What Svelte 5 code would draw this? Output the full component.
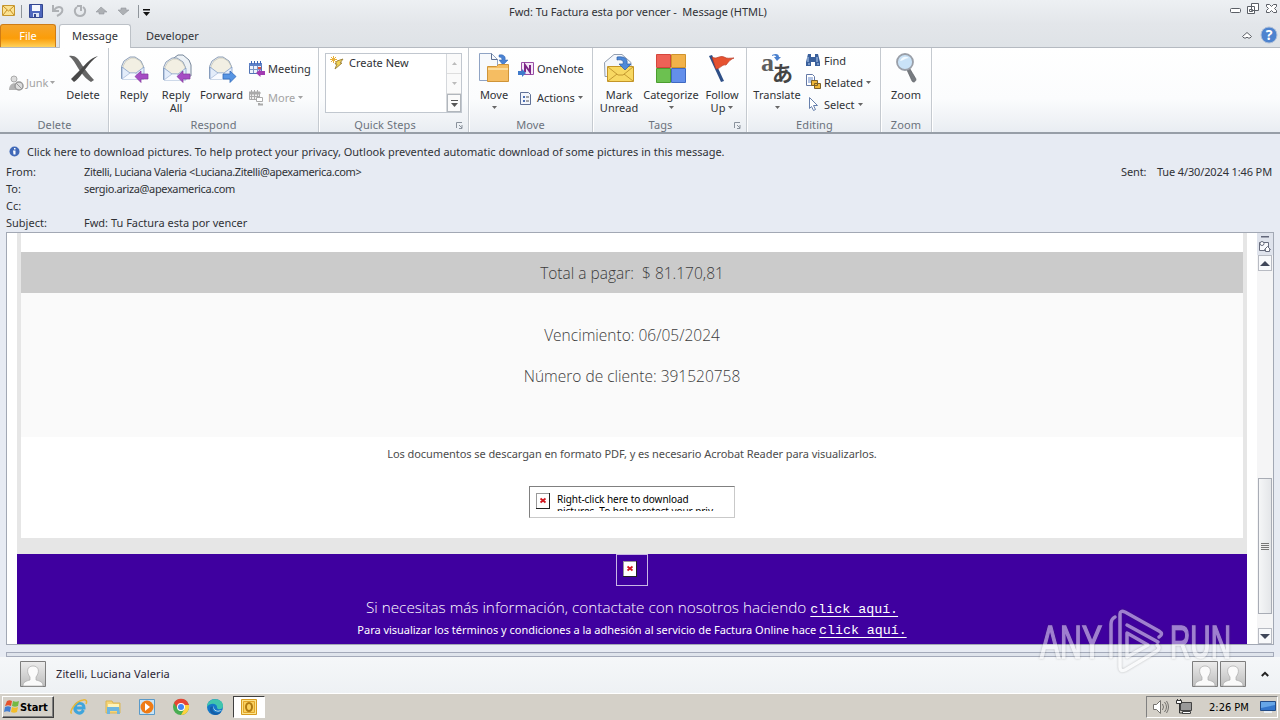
<script lang="ts">
  const fields = [
    { label: 'From:', value: 'Zitelli, Luciana Valeria <Luciana.Zitelli@apexamerica.com>' },
    { label: 'To:', value: 'sergio.ariza@apexamerica.com' },
    { label: 'Cc:', value: '' },
    { label: 'Subject:', value: 'Fwd: Tu Factura esta por vencer' },
  ];
</script>

{#snippet caret()}
  <svg class="caret" width="5" height="3" viewBox="0 0 5 3"><path d="M0 0h5L2.500 3z" fill="currentColor" /></svg>
{/snippet}

{#snippet envelope()}
  <path d="M3.500 14.500 6 9l6-4h5l6 4 2.500 5.500v12h-22z" fill="#edf1f8" stroke="#8fa0b8" />
  <path d="M5 14 8 9l5-3h4l5 3 3 5v4l-7 5h-6l-7-5z" fill="#f2efe3" stroke="#b9b8aa" stroke-width=".6" />
  <path d="m4 15 8 6h6l8-6v12H4z" fill="#e3ecfa" stroke="#7795c3" stroke-width=".7" />
  <path d="m4 27 8-6h5l8 6" fill="#f8faff" stroke="#a2b6d5" stroke-width=".7" />
{/snippet}

{#snippet replyIcon()}
  <svg width="32" height="32" viewBox="0 0 32 32">
    {@render envelope()}
    <path d="m17 24.500 6-5.500v3h7v5h-7v3.500z" fill="#a64cc4" stroke="#813a9c" stroke-width=".7" />
  </svg>
{/snippet}

{#snippet replyAllIcon()}
  <svg width="32" height="32" viewBox="0 0 32 32">
    <path d="m11 8 7-5h5l6 5 2 5v11H19z" fill="#edf2f6" stroke="#76869a" />
    <g transform="translate(0 1)">{@render envelope()}</g>
    <path d="m17 24.500 6-5.500v3h7v5h-7v3.500z" fill="#a64cc4" stroke="#813a9c" stroke-width=".7" />
  </svg>
{/snippet}

{#snippet forwardIcon()}
  <svg width="32" height="32" viewBox="0 0 32 32">
    {@render envelope()}
    <path d="m30 24.500-6-5.500v3h-7v5h7v3.500z" fill="#5795e4" stroke="#346bb9" stroke-width=".8" />
  </svg>
{/snippet}

{#snippet deleteIcon()}
  <svg width="32" height="32" viewBox="0 0 32 32">
    <path d="M2 4c6-1 9 2 13 9 4 6 8 11 12 15l-3 2C18 26 15 22 11 16 8 11 6 7 2 4z" fill="#666" />
    <path d="M31 4C23 6 19 12 14 17L4 27l3 3c6-4 8-9 13-15 3-4 6-8 11-11z" fill="#484848" />
  </svg>
{/snippet}

{#snippet moveIcon()}
  <svg width="32" height="32" viewBox="0 0 32 32">
    <path d="M1.500 1.500h12l6 6v21h-18z" fill="#f7f9fc" stroke="#8fa3c4" />
    <path d="M13.500 1.500v6h6" fill="none" stroke="#5c6f92" />
    <path d="M21 3c5-1 7 2 6 5h3l-5 5-4-5h3c0-2-1-3-3-3z" fill="#4b83d4" stroke="#2e61ac" stroke-width=".5" />
    <path d="M9.500 14.500h9l2-2h10v17h-21z" fill="#f5bd62" stroke="#cf9438" />
    <path d="M10 16h20v2H10z" fill="#fcdc9c" />
  </svg>
{/snippet}

{#snippet unreadIcon()}
  <svg width="32" height="32" viewBox="0 0 32 32">
    <path d="M1.500 10.500 11 2.500h8l9 8v14h-26z" fill="#f4f7fc" stroke="#929eb0" />
    <path d="M4.500 14.500h26v15h-26z" fill="#f8d862" stroke="#c49527" />
    <path d="m5 15 10 8h5l10-8M5 29l9-7m16 7-9-7" fill="none" stroke="#b88a25" stroke-width=".8" />
    <path d="M14 5c8-1 11 2 10 7h4l-6 6-6-6h4c1-3-1-5-6-4z" fill="#4e89d9" stroke="#2b5ca4" stroke-width=".7" />
  </svg>
{/snippet}

{#snippet categorizeIcon()}
  <svg width="32" height="32" viewBox="0 0 32 32">
    <path d="M1.500 2.500h14v13h-14z" fill="#ee6257" stroke="#d5463c" />
    <path d="M16.500 2.500h14v13h-14z" fill="#f2b24a" stroke="#d0932c" />
    <path d="M1.500 16.500h14v14h-14z" fill="#6cc150" stroke="#4b9d2f" />
    <path d="M16.500 16.500h14v14h-14z" fill="#638feb" stroke="#3f69c2" />
  </svg>
{/snippet}

{#snippet flagIcon()}
  <svg width="32" height="32" viewBox="0 0 32 32">
    <path d="m3 4 3-1 12 26-3 1z" fill="#2e4f87" />
    <path d="M6 5c5 3 7-2 12 0 3 2 6 1 10 1-5 2-6 5-8 7-4-1-6 4-10 4z" fill="#e65230" stroke="#b83823" stroke-width=".7" />
  </svg>
{/snippet}

{#snippet translateIcon()}
  <svg width="36" height="32" viewBox="0 0 36 32">
    <text x="2" y="19" class="latin-a">a</text>
    <text x="13" y="29" class="kana">あ</text>
    <path d="M13 3c4-2 7-1 7 2h2l-4 4-3-4h2c0-1-1-2-4-1z" fill="#4a80ce" />
  </svg>
{/snippet}

{#snippet zoomIcon()}
  <svg width="32" height="32" viewBox="0 0 32 32">
    <path d="m17 18 3-1 6 10c0 3-3 4-4 2z" fill="#777b80" stroke="#56595e" stroke-width=".6" />
    <circle cx="15" cy="10" r="8" fill="#c9e2f7" stroke="#9a9fa8" stroke-width="1.800" />
    <path d="M10 9c2-5 6-5 9-3-4 0-6 3-9 3z" fill="#f3faff" />
  </svg>
{/snippet}

{#snippet big(icon: any, first: string, second: string, width: number, menu = false)}
  <button class="big" style="width: {width}px">
    {@render icon()}
    <span>{first}</span>
    <span class="second">{second}{#if menu}{@render caret()}{/if}</span>
  </button>
{/snippet}

{#snippet person()}
  <svg class="person" width="26" height="26" viewBox="0 0 26 26">
    <defs>
      <linearGradient id="grey" x2="0" y2="1"><stop stop-color="#ececec" /><stop offset="1" stop-color="#bdbdbd" /></linearGradient>
    </defs>
    <path d="M.5.5h25v25H.5z" fill="url(#grey)" stroke="#7e7e7e" />
    <path d="M3 25c0-4 3-5 7-6v-3C6 11 7 5 13 5s7 6 3 11v3c4 1 7 2 7 6z" fill="#fafafa" stroke="#aaa" stroke-width=".7" />
  </svg>
{/snippet}

{#snippet broken()}
  <svg class="broken" width="14" height="16" viewBox="0 0 14 16">
    <path d="M0 0h14v16H0z" fill="#222" />
    <path d="M0 0h13v15H0z" fill="#999" />
    <path d="M1 1h12v14H1z" fill="#fff" />
    <path d="m4.500 5.500 5 4m0-4-5 4" stroke="#d1161e" stroke-width="1.800" />
  </svg>
{/snippet}

<div class="screen">
  <header class="titlebar">
    <div class="quick">
      <svg width="152" height="24" viewBox="0 0 152 24">
        <path d="M2.500 5.500h12v10h-12z" fill="#fbe292" stroke="#c6962f" />
        <path d="m3 6 5.500 5L14 6M3 15l4-5m7 5-4-5" fill="none" stroke="#c58f25" />
        <path d="M21.500 5v13M138.500 5v13" stroke="#8f959b" />
        <path d="M29.500 4.500h13v13h-13z" fill="#4e67bd" stroke="#33468f" />
        <path d="M32 5h8v6h-8z" fill="#f6f8fd" /><path d="M33 13h6v4h-6z" fill="#dce4f5" /><path d="M34 14h2v3h-2z" fill="#33468f" />
        <path d="M53 5v6h6M54 10c4-5 10-3 8 2-1 2-3 3-5 4" fill="none" stroke="#aeb1b5" stroke-width="2" />
        <path d="M77 7c-4 3-2 9 3 9s7-6 3-9m-6-1h4v5" fill="none" stroke="#aeb1b5" stroke-width="2" />
        <path d="m101 7-5 5h3v2h5v-2h3zM123 15l-5-5h3V8h5v2h3z" fill="#adb0b4" stroke="#95999d" stroke-width=".6" />
        <path d="M143 9h7v1.500h-7zM143 12h7l-3.500 4z" fill="#111" />
      </svg>
    </div>
    <h1>Fwd: Tu Factura esta por vencer -&nbsp; Message (HTML)</h1>
    <svg class="window-buttons" width="52" height="22" viewBox="0 0 52 22" fill="#fff" stroke="#5b5f66">
      <rect x="2.500" y="8.500" width="10" height="4" rx="1" />
      <path d="M23.500 3.500h7v7h-7zM19.500 6.500h7v7h-7zM21.500 9.500h3v2h-3z" />
      <path d="M38.500 4.500h3l2 2 2-2h3v2l-2 2 2 2v2h-3l-2-2-2 2h-3v-2l2-2-2-2z" />
    </svg>
  </header>

  <nav class="tabs">
    <button class="tab file">File</button>
    <button class="tab active">Message</button>
    <button class="tab">Developer</button>
    <svg class="help" width="39" height="22" viewBox="0 0 39 22">
      <path d="M1.500 12.500 6 8.500l4.500 4-1.500 1.500H7l-1-1-1 1H3z" fill="#fff" stroke="#5b5f66" />
      <circle cx="28" cy="11" r="8" fill="#4d83cf" stroke="#aebfd8" />
      <text x="28" y="16" text-anchor="middle">?</text>
    </svg>
  </nav>

  <section class="ribbon">
    <div class="group delete">
      <div class="tools">
        <div class="column">
          <button class="small disabled">
            <svg width="16" height="16" viewBox="0 0 16 16"><circle cx="6" cy="4" r="3" fill="#ddd" stroke="#aaa" /><path d="M1 15c0-9 10-9 10 0z" fill="#b4b4b4" /><circle cx="11" cy="11" r="4" fill="#ddd" stroke="#999" stroke-width="1.500" /><path d="m8 8 6 6" stroke="#999" /></svg>
            Junk{@render caret()}
          </button>
        </div>
        {@render big(deleteIcon, 'Delete', '', 44)}
      </div>
      <footer>Delete</footer>
    </div>

    <div class="group respond">
      <div class="tools">
        {@render big(replyIcon, 'Reply', '', 42)}
        {@render big(replyAllIcon, 'Reply', 'All', 42)}
        {@render big(forwardIcon, 'Forward', '', 49)}
        <div class="column two">
          <button class="small">
            <svg width="16" height="16" viewBox="0 0 16 16"><path d="M.5 2.500h12v10H.5z" fill="#eef3fc" stroke="#5275b6" /><path d="M0 2h13v3H0z" fill="#5f82c8" /><path d="M2.500 0v3m3-3v3m3-3v3m3-3v3" stroke="#3f66b6" /><path d="M1 8.500h11M4.500 5v7M8.500 5v7" stroke="#7b96c7" /><path d="M9 6h3v2H9z" fill="#d65342" /><path d="m7 12 4.500-4v2H16v4h-4.500v2z" fill="#a23bb2" /></svg>
            Meeting
          </button>
          <button class="small disabled">
            <svg width="16" height="16" viewBox="0 0 16 16"><path d="M.5 2.500h10v7H.5z" fill="#eee" stroke="#aaa" /><path d="M0 2h11v2H0zM2.500 0v9M5.500 0v9M8.500 0v9M1 6.500h9" fill="#aaa" stroke="#aaa" /><path d="M7.500 7.500h6v4h-6z" fill="#fff" stroke="#aaa" /><path d="M10 13v1.500h4" fill="none" stroke="#aaa" stroke-width="2" /></svg>
            More{@render caret()}
          </button>
        </div>
      </div>
      <footer>Respond</footer>
    </div>

    <div class="group steps">
      <div class="tools">
        <div class="gallery">
          <div class="choice">
            <svg width="16" height="16" viewBox="0 0 16 16"><path d="m8 5 6-2-3 4h2l-7 6 2-5H6z" fill="#f5d454" stroke="#a18843" /><path d="M4.500 0v7M1 3.500h7M2 1l5 5m0-5L2 6" stroke="#e8b03a" /></svg>
            Create New
          </div>
          <div class="spinner">
            <i><svg width="5" height="3"><path d="M0 3h5L2.500 0z" fill="#bbb" /></svg></i>
            <i><svg width="5" height="3"><path d="M0 0h5L2.500 3z" fill="#bbb" /></svg></i>
            <i class="more"><svg width="7" height="7"><path d="M0 0h7v1H0zM0 3h7L3.500 7z" fill="#555" /></svg></i>
          </div>
        </div>
      </div>
      <footer>Quick Steps
        <svg class="launcher" width="7" height="7" viewBox="0 0 7 7"><path d="M.5 6V.5H6M3 3l3 3m0-3v3.500H3" fill="none" stroke="#8a929c" /></svg>
      </footer>
    </div>

    <div class="group move">
      <div class="tools">
        {@render big(moveIcon, 'Move', '', 42, true)}
        <div class="column two">
          <button class="small">
            <svg width="16" height="16" viewBox="0 0 16 16"><path d="M3.500 1.500h12v12h-12z" fill="#f5e6f7" stroke="#9a4fa6" /><path d="M7 11V4l5 7V4" fill="none" stroke="#7c2587" stroke-width="2" /><path d="M0 10h4V8l4 4-4 4v-2H0z" fill="#3f7acb" /></svg>
            OneNote
          </button>
          <button class="small">
            <svg width="16" height="16" viewBox="0 0 16 16"><path d="M2.500 2.500h8l2 2v10h-10z" fill="#f3f6fc" stroke="#607196" /><path d="M5 6h2v2H5zM5 10h2v2H5z" fill="#4d70b4" /><path d="M8 7h3M8 11h3" stroke="#555" /></svg>
            Actions{@render caret()}
          </button>
        </div>
      </div>
      <footer>Move</footer>
    </div>

    <div class="group tags">
      <div class="tools">
        {@render big(unreadIcon, 'Mark', 'Unread', 48)}
        {@render big(categorizeIcon, 'Categorize', '', 56, true)}
        {@render big(flagIcon, 'Follow', 'Up', 46, true)}
      </div>
      <footer>Tags
        <svg class="launcher" width="7" height="7" viewBox="0 0 7 7"><path d="M.5 6V.5H6M3 3l3 3m0-3v3.500H3" fill="none" stroke="#8a929c" /></svg>
      </footer>
    </div>

    <div class="group editing">
      <div class="tools">
        {@render big(translateIcon, 'Translate', '', 56, true)}
        <div class="column three">
          <button class="small">
            <svg width="16" height="16" viewBox="0 0 16 16"><path d="M3 2h3v3h4V2h3l2 8v4h-5v-4H6v4H1v-4z" fill="#395f9b" /><path d="M3 5v5m9-5v5M3 12h2m7 0h2" stroke="#b7d1f3" /></svg>
            Find
          </button>
          <button class="small">
            <svg width="16" height="16" viewBox="0 0 16 16"><path d="M1.500.5h6l2 2v9h-8z" fill="#fff" stroke="#6478a5" /><path d="M3 4h5M3 6h5M3 8h5" stroke="#6487c9" /><path d="M6.500 6.500h6v5h-6zM9.500 9.500h6v5h-6z" fill="#efb83b" stroke="#7f6127" /></svg>
            Related{@render caret()}
          </button>
          <button class="small">
            <svg width="16" height="16" viewBox="0 0 16 16"><path d="m4.500 1.500 8 8h-4l2 4-2 1-2-4-2 2z" fill="#fff" stroke="#6780ac" /></svg>
            Select{@render caret()}
          </button>
        </div>
      </div>
      <footer>Editing</footer>
    </div>

    <div class="group zoom">
      <div class="tools">{@render big(zoomIcon, 'Zoom', '', 50)}</div>
      <footer>Zoom</footer>
    </div>
  </section>

  <section class="headers">
    <p class="infobar">
      <svg width="11" height="11" viewBox="0 0 11 11"><circle cx="5.500" cy="5.500" r="5" fill="#4169b8" /><path d="M5 2h1.500v1.500H5zM4 4.500h2.500v4H4.500" fill="#fff" /></svg>
      Click here to download pictures. To help protect your privacy, Outlook prevented automatic download of some pictures in this message.
    </p>
    <dl>
      {#each fields as field}
        <div class="field"><dt>{field.label}</dt><dd class:address={field.value.includes('@')}>{field.value}</dd></div>
      {/each}
    </dl>
    <p class="sent"><span>Sent:</span> Tue 4/30/2024 1:46 PM</p>
  </section>

  <main class="reader">
    <article>
      <div class="sheet">
        <p class="total">Total a pagar:&nbsp; $ 81.170,81</p>
        <div class="details">
          <p class="due">Vencimiento: 06/05/2024</p>
          <p class="client">Número de cliente: 391520758</p>
        </div>
        <p class="note">Los documentos se descargan en formato PDF, y es necesario Acrobat Reader para visualizarlos.</p>
        <div class="blocked">
          {@render broken()}
          <p>Right-click here to download<br />pictures. To help protect your priv</p>
        </div>
      </div>
      <div class="contact">
        <div class="blocked-logo">{@render broken()}</div>
        <p class="info"><span>Si necesitas más información, contactate con nosotros haciendo</span> <a href="#contact">click aquí.</a></p>
        <p class="terms"><span>Para visualizar los términos y condiciones a la adhesión al servicio de Factura Online hace</span> <a href="#terms">click aquí.</a></p>
      </div>
    </article>
    <div class="scrollbar">
      <svg width="16" height="22" viewBox="0 0 16 22">
        <path d="M0 0h16v22H0z" fill="#dfe3ec" /><path d="M4 3h8v1.500H4z" fill="#62677a" />
        <path d="M2.500 9.500h9v8h-9z" fill="#f7f8fb" stroke="#666b7c" /><circle cx="5" cy="10.500" r="2" fill="#fff" stroke="#666b7c" /><path d="m7.500 16.500 3-3 3 3h-1v2h-4v-2z" fill="#fff" stroke="#666b7c" />
      </svg>
      <button class="arrow" aria-label="Up"><svg width="10" height="5"><path d="M0 5h10L5 0z" fill="#3f4659" /></svg></button>
      <div class="thumb"><i></i></div>
      <button class="arrow" aria-label="Down"><svg width="10" height="5"><path d="M0 0h10L5 5z" fill="#3f4659" /></svg></button>
    </div>
  </main>
  <div class="splitter"></div>

  <section class="people">
    {@render person()}
    <span>Zitelli, Luciana Valeria</span>
    <div class="contacts">{@render person()}{@render person()}</div>
    <svg width="8" height="6" viewBox="0 0 8 6"><path d="m.8 5 3.200-3.200L7.200 5" fill="none" stroke="#222" stroke-width="2" /></svg>
  </section>

  <footer class="taskbar">
    <button class="start">
      <svg width="16" height="16" viewBox="0 0 16 16"><path d="M3 2c2-1 3-1 5 0L7 7C5 6 4 6 1 7z" fill="#e5522d" /><path d="M9 2c2 1 4 1 6 0l-1 5c-2 1-4 1-6 0z" fill="#75b943" /><path d="M1 8c2-1 4-1 6 0l-1 5c-2-1-4-1-6 0z" fill="#437ed1" /><path d="M8 8c2 1 4 1 6 0l-1 5c-2 1-4 1-6 0z" fill="#f3bd29" /></svg>
      Start
    </button>
    <div class="apps">
      <svg width="18" height="18" viewBox="0 0 18 18"><path d="M13.500 12C10 18 4 14 5 9s9-5 9 1H5" fill="none" stroke="#3fa5dc" stroke-width="3" /><path d="M2 15C-2 16 5 3 13 2c4-1 4 2 3 4" fill="none" stroke="#e9b83a" stroke-width="1.500" /></svg>
      <svg width="18" height="18" viewBox="0 0 18 18"><path d="M2 3h6l1 2h7v10H2z" fill="#f6d477" stroke="#d9b554" /><path d="M4 6h11v4H4z" fill="#fff4b9" /><path d="M3 9h12l1 7h-3v-3H6v3H3z" fill="#6eb6df" /></svg>
      <svg width="18" height="18" viewBox="0 0 18 18"><path d="M1.500 1.500h15v15h-15z" fill="#c8e4f7" stroke="#5a9ac9" /><circle cx="9" cy="9" r="6.500" fill="#ef7b15" /><path d="m7 5 5 4-5 4z" fill="#fff" /></svg>
      <svg width="18" height="18" viewBox="0 0 18 18"><circle cx="9" cy="9" r="8" fill="#48ad52" /><path d="M2 5a8 8 0 0 1 14 0l1 2H9l-3 4z" fill="#e74434" /><path d="M17 7c1 5-3 10-8 10l4-7-1-3z" fill="#ffd13f" /><circle cx="9" cy="9" r="4" fill="#fff" /><circle cx="9" cy="9" r="3" fill="#4285f4" /></svg>
      <svg width="18" height="18" viewBox="0 0 18 18"><circle cx="9" cy="9" r="8" fill="#1478c8" /><path d="M1 9C1-1 17-1 17 8c0 4-5 4-6 2 1-5-7-6-10-1z" fill="#40c5ad" /><path d="M7 9c-2 5 4 7 8 5-4 6-12 2-11-3 0-2 1-3 3-2z" fill="#155ea7" /><path d="M8 8c-1 4 3 6 8 4-6 4-10-1-8-4z" fill="#e5f1f3" /></svg>
    </div>
    <div class="running">
      <svg width="16" height="16" viewBox="0 0 16 16"><path d="M.5.500h15v15H.5z" fill="#fbe38b" stroke="#d79b20" /><path d="M2.500 2.500h11v11h-11z" fill="#f9cf5c" stroke="#e2a52a" /><ellipse cx="8" cy="8" rx="3" ry="4" fill="none" stroke="#b07a12" stroke-width="2" /></svg>
    </div>
    <div class="tray">
      <svg width="18" height="16" viewBox="0 0 18 16" fill="none" stroke="#73716d"><path d="M1.500 5.500h3l4-4v13l-4-4h-3z" fill="#fff" /><path d="M10.500 5q2 3 0 6M12.500 3q4 5 0 10M14.500 2q4 6 0 12" /></svg>
      <svg width="16" height="16" viewBox="0 0 16 16"><path d="M4.500 3.500h11v8h-11z" fill="#999" stroke="#444" /><path d="M6.500 12.500h8v2h-8z" fill="#fff" stroke="#444" /><path d="M3.500 5v9H7" fill="none" stroke="#333" /><path d="M.5 1.500h5v3h-5zM1.500 0v1m3-1v1" fill="#fff" stroke="#333" /></svg>
      <time>2:26 PM</time>
      <svg width="16" height="14" viewBox="0 0 16 14"><path d="M.5 1.500h15v9H.5z" fill="#3476cb" stroke="#234c87" /><path d="m1 2 14 0v3L1 8z" fill="#66a6e7" /><path d="M4 12h8" stroke="#e9eef3" stroke-width="2" /></svg>
    </div>
  </footer>

  <svg class="watermark" width="204" height="70" viewBox="0 0 204 70">
    <text x="5" y="53" textLength="62" lengthAdjust="spacingAndGlyphs">ANY</text>
    <text x="135" y="53" textLength="61" lengthAdjust="spacingAndGlyphs">RUN</text>
    <g fill="none" stroke-linejoin="round" stroke-linecap="round">
      <path d="M76 52V19q0-5 4-7M85 40V9q0-4 5-2l34 19q5 3 0 6M92 20l31 17M85 40v22q0 5 5 3l32-19q4-3 0-6M92 52l21-12-21-12z" />
    </g>
  </svg>
</div>

<style>
  :global(body) {
    background: #e6ebf4;
    overflow: hidden;
  }
  .screen {
    position: relative;
    width: 1280px;
    height: 720px;
    display: flex;
    flex-direction: column;
    overflow: hidden;
    background: #e7ebf3;
    color: #303236;
    font: 11px/13px "Noto Sans", "Open Sans", sans-serif;
  }
  p, h1, dl, dd {
    margin: 0;
  }
  button {
    padding: 0;
    border: 0;
    background: none;
    color: inherit;
    font: inherit;
  }
  svg {
    display: block;
    flex: none;
  }
  .titlebar {
    height: 24px;
    flex: none;
    display: grid;
    grid-template-columns: 152px 1fr 52px;
    background: linear-gradient(#edf0f3, #e3e6ea);
  }
  h1 {
    font: inherit;
    line-height: 24px;
    padding-left: 357px;
    white-space: nowrap;
    letter-spacing: -0.06px;
  }
  .tabs {
    box-sizing: border-box;
    height: 24px;
    flex: none;
    display: flex;
    background: linear-gradient(#e3e6ea, #dfe3e7);
    border-bottom: 1px solid #b5bac1;
  }
  .tab {
    height: 24px;
    padding: 0 12px 2px;
    margin-right: 3px;
  }
  .file {
    width: 56px;
    height: 23px;
    border: 1px solid #ce7c16;
    border-bottom: 0;
    border-radius: 3px 3px 0 0;
    background: linear-gradient(#f5a52d, #fb9d09 60%, #ffd15a);
    color: #fff;
  }
  .active {
    width: 72px;
    border: 1px solid #bcc1c7;
    border-bottom: 0;
    border-radius: 3px 3px 0 0;
    background: #fff;
  }
  .help {
    margin-left: auto;
  }
  .help text {
    fill: #fff;
    font: bold 14px "Noto Sans", sans-serif;
  }
  .ribbon {
    box-sizing: border-box;
    height: 86px;
    flex: none;
    display: flex;
    background: linear-gradient(#fff, #fbfcfd 60%, #e9edf2);
    border-bottom: 2px solid #979ea7;
  }
  .group {
    display: flex;
    flex-direction: column;
    justify-content: space-between;
    border-right: 1px solid #c5cad0;
    box-shadow: 1px 0 #fff;
    box-sizing: border-box;
  }
  .tools {
    display: flex;
    height: 69px;
  }
  .group footer {
    display: flex;
    justify-content: center;
    position: relative;
    height: 14px;
    color: #6b727c;
    letter-spacing: 0.1px;
  }
  .launcher {
    position: absolute;
    right: 5px;
    top: 4px;
  }
  .delete { width: 109px; padding-left: 8px; }
  .respond { width: 210px; padding-left: 4px; }
  .steps { width: 150px; padding-left: 6px; }
  .move { width: 124px; padding-left: 4px; }
  .tags { width: 154px; padding-left: 2px; }
  .editing { width: 134px; padding-left: 2px; }
  .zoom { width: 51px; }
  .group.delete footer { margin-left: -7px; }
  .group.respond footer, .group.move footer { margin-left: -4px; }
  .group.steps footer { margin-left: -6px; padding-right: 17px; }
  .group.tags footer { padding-right: 20px; }
  .big {
    display: flex;
    flex-direction: column;
    align-items: center;
    padding-top: 4px;
    flex: none;
    white-space: nowrap;
  }
  .big span {
    margin-top: 4px;
  }
  .big .second {
    display: flex;
    align-items: center;
    gap: 3px;
    height: 13px;
    margin-top: 0;
  }
  .latin-a {
    font: bold 26px "Liberation Serif", serif;
    fill: #5e5e5e;
  }
  .kana {
    font: bold 21px "Noto Sans CJK JP", sans-serif;
    fill: #444;
  }
  .caret {
    color: #666;
  }
  .small {
    display: flex;
    align-items: center;
    gap: 3px;
    height: 69px;
    white-space: nowrap;
  }
  .delete .small {
    gap: 2px;
    width: 54px;
    margin-right: -1px;
  }
  .disabled, .disabled .caret {
    color: #a3a3a3;
  }
  .two {
    padding: 6px 0 0 3px;
  }
  .two .small { height: 29px; }
  .three { padding-top: 1px; }
  .three .small { height: 22px; }
  .gallery {
    display: flex;
    box-sizing: border-box;
    width: 137px;
    height: 60px;
    margin-top: 5px;
    border: 1px solid #c1c7cf;
    background: #fff;
  }
  .choice {
    display: flex;
    flex: 1;
    gap: 4px;
    padding: 2px 3px;
  }
  .spinner {
    width: 14px;
    border-left: 1px solid #d5d8dc;
    background: #fafafa;
  }
  .spinner i {
    display: flex;
    justify-content: center;
    align-items: center;
    box-sizing: border-box;
    height: 20px;
    border-bottom: 1px solid #dedede;
  }
  .spinner .more {
    height: 18px;
    border: 1px solid #b1b6bc;
  }
  .headers {
    height: 98px;
    display: grid;
    grid-template-columns: 1fr 160px;
    grid-template-rows: 29px 1fr;
    box-sizing: border-box;
    flex: none;
  }
  .infobar {
    grid-column: 1 / 3;
    display: flex;
    align-items: center;
    gap: 7px;
    padding: 6px 0 0 9px;
  }
  .field {
    display: flex;
    height: 17px;
    align-items: center;
    padding-left: 6px;
  }
  dt {
    width: 78px;
  }
  .address {
    letter-spacing: -0.37px;
  }
  .sent {
    display: flex;
    justify-content: space-between;
    padding: 2px 8px 0 1px;
    letter-spacing: -0.13px;
    white-space: nowrap;
  }
  .reader {
    display: flex;
    box-sizing: border-box;
    width: 1268px;
    height: 413px;
    flex: none;
    margin-left: 6px;
    padding-left: 10px;
    border: 1px solid #a2a8b4;
    background: #fff;
  }
  article {
    width: 1230px;
    height: 411px;
    overflow: hidden;
    background: #e6e6e6;
    color: #4c4c4c;
    text-align: center;
    white-space: nowrap;
  }
  .sheet {
    height: 305px;
    margin: 0 4px 16px;
    background: #fff;
    overflow: hidden;
  }
  .total {
    margin-top: 19px;
    height: 41px;
    line-height: 43px;
    background: #cbcbcb;
  }
  .total, .details {
    font-family: "Open Sans", "Noto Sans", sans-serif;
    font-size: 15.5px;
    font-weight: 300;
    color: #3c3c3c;
  }
  .details {
    box-sizing: border-box;
    height: 144px;
    padding-top: 22px;
    background: #fafafa;
    line-height: 41px;
  }
  .note {
    line-height: 34px;
    letter-spacing: -0.07px;
  }
  .blocked {
    display: flex;
    box-sizing: border-box;
    width: 206px;
    height: 32px;
    margin: 15px auto 0;
    padding: 6px;
    gap: 7px;
    border: 1px solid #808080;
    border-right-color: #c9c9c9;
    border-bottom-color: #c9c9c9;
    color: #000;
    font-size: 10px;
    line-height: 12px;
    letter-spacing: -0.06px;
    text-align: left;
  }
  .blocked p {
    width: 165px;
    height: 18px;
    overflow: hidden;
  }
  .contact {
    height: 90px;
    background: #3f009f;
    color: #fff;
  }
  .blocked-logo {
    box-sizing: border-box;
    display: flex;
    width: 32px;
    height: 32px;
    margin: 0 auto;
    padding: 6px;
    border: 1px solid #c9b6e5;
  }
  .info {
    font: 300 15.3px/22px "Open Sans", sans-serif;
    margin-top: 10px;
  }
  .terms {
    line-height: 24px;
    letter-spacing: -0.02px;
  }
  a {
    color: #fff;
    font: 13.3px/15px "Liberation Mono", monospace;
    text-underline-offset: 3px;
  }
  .scrollbar {
    display: flex;
    flex-direction: column;
    width: 16px;
    margin-left: 10px;
    background: #f5f5f6;
  }
  .arrow {
    display: grid;
    place-content: center;
    box-sizing: border-box;
    width: 14px;
    height: 16px;
    margin-left: 1px;
    border: 1px solid #b8bbc3;
    background: #f8f9fb;
    flex: none;
  }
  .thumb {
    display: grid;
    place-content: center;
    box-sizing: border-box;
    width: 14px;
    height: 136px;
    margin: 207px 0 14px 1px;
    border: 1px solid #a8acb5;
    background: linear-gradient(90deg, #f5f6f7, #e4e6e9);
  }
  .thumb i {
    width: 8px;
    height: 7px;
    background: repeating-linear-gradient(#777 0 1px, #eee 1px 2px);
  }
  .splitter {
    box-sizing: border-box;
    width: 1268px;
    height: 5px;
    margin: 7px 6px 0;
    border: 1px solid #a4aaba;
    background: #dfe4ec;
    flex: none;
  }
  .people {
    display: flex;
    align-items: center;
    box-sizing: border-box;
    height: 36px;
    padding: 0 11px 3px 20px;
    background: linear-gradient(#f5f7f9, #eef1f4);
    color: #2c2435;
    flex: none;
  }
  .people > span {
    margin-left: 10px;
    letter-spacing: 0.1px;
  }
  .contacts {
    display: flex;
    gap: 2px;
    margin: 0 15px 0 auto;
  }
  .taskbar {
    display: flex;
    align-items: center;
    box-sizing: border-box;
    height: 27px;
    flex: none;
    padding: 0 2px;
    border-top: 1px solid #fff;
    background: #d4d0c8;
    color: #000;
  }
  .start {
    display: flex;
    align-items: center;
    box-sizing: border-box;
    width: 52px;
    height: 22px;
    padding-left: 1px;
    border: 1px solid;
    border-color: #fff #404040 #404040 #fff;
    box-shadow: inset -1px -1px #808080;
    font: bold 11px "DejaVu Sans Condensed", "Noto Sans", sans-serif;
    letter-spacing: -0.1px;
  }
  .apps {
    display: flex;
    gap: 16px;
    margin-left: 16px;
  }
  .running {
    display: grid;
    place-content: center;
    box-sizing: border-box;
    width: 32px;
    height: 22px;
    margin-left: 9px;
    border: 1px solid;
    border-color: #404040 #fff #fff #404040;
    background: #fff;
  }
  .tray {
    display: flex;
    align-items: center;
    box-sizing: border-box;
    width: 132px;
    height: 22px;
    margin-left: auto;
    padding-left: 5px;
    border: 1px solid;
    border-color: #808080 #fff #fff #808080;
    font-family: "DejaVu Sans Condensed", "Liberation Sans", sans-serif;
  }
  .tray svg + svg { margin-left: 6px; }
  time { margin: 0 11px 0 17px; white-space: nowrap; }
  .watermark {
    position: absolute;
    left: 1035px;
    top: 605px;
    pointer-events: none;
    filter: drop-shadow(0 0 1px rgb(60 60 60 / 0.6));
    opacity: 0.5;
  }
  .watermark text {
    font: 47px "Liberation Sans", sans-serif;
    fill: #fff;
    stroke: #fff;
    stroke-width: 1.6;
  }
  .watermark g {
    stroke: #fff;
    stroke-width: 3.5;
  }
</style>
